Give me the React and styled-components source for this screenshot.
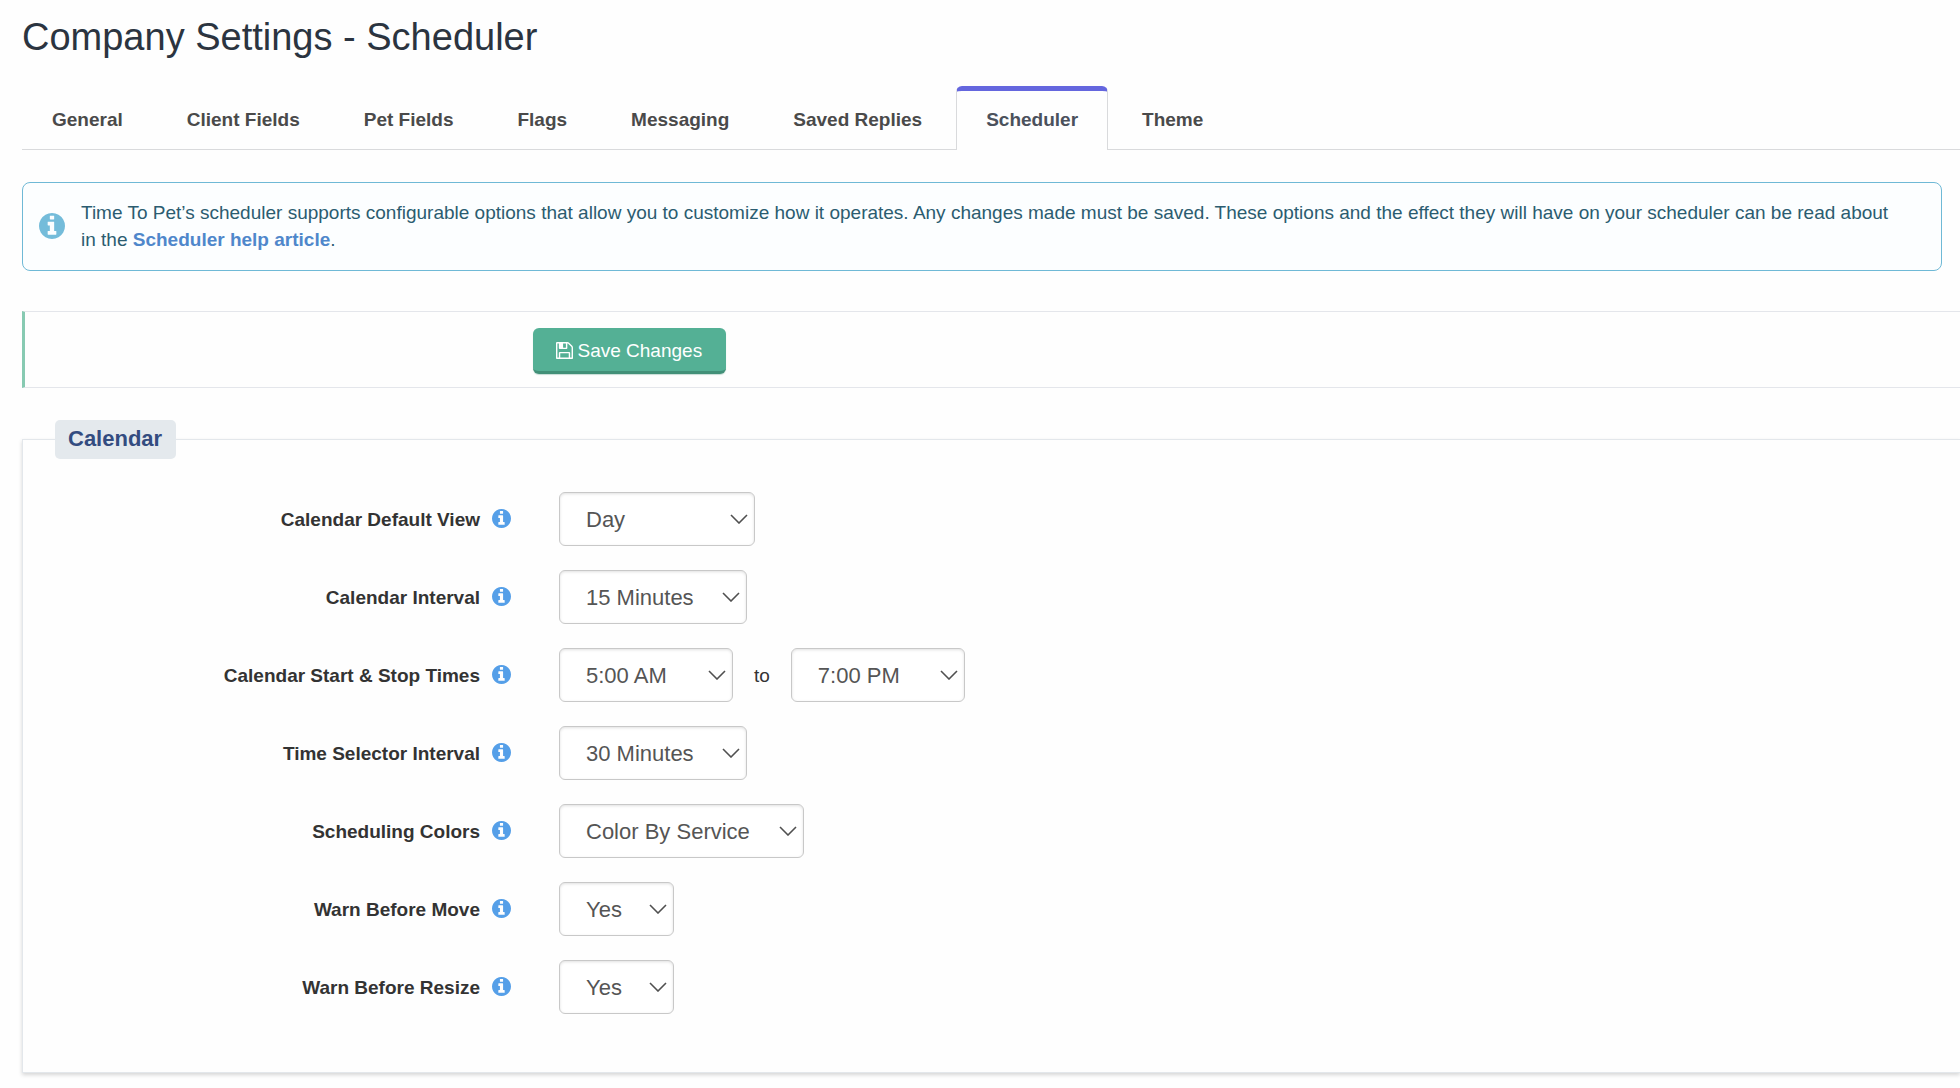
import React, { useState } from 'react';
import styled, { createGlobalStyle } from 'styled-components';

const tabs = [
    'General',
    'Client Fields',
    'Pet Fields',
    'Flags',
    'Messaging',
    'Saved Replies',
    'Scheduler',
    'Theme'
];

const times = ['5:00 AM', '6:00 AM', '7:00 AM', '8:00 AM', '5:00 PM', '6:00 PM', '7:00 PM', '8:00 PM'];
const intervals = ['15 Minutes', '30 Minutes', '60 Minutes'];

const fields = [
    { label: 'Calendar Default View', selects: [{ name: 'defaultView', width: 196, options: ['Day', 'Week', 'Month'] }] },
    { label: 'Calendar Interval', selects: [{ name: 'interval', width: 188, options: intervals }] },
    {
        label: 'Calendar Start & Stop Times',
        selects: [
            { name: 'startTime', width: 174, options: times },
            { name: 'stopTime', width: 174, options: times, ariaLabel: 'Calendar Stop Time' }
        ]
    },
    { label: 'Time Selector Interval', selects: [{ name: 'selectorInterval', width: 188, options: intervals }] },
    { label: 'Scheduling Colors', selects: [{ name: 'colors', width: 245, options: ['Color By Service', 'Color By Staff'] }] },
    { label: 'Warn Before Move', selects: [{ name: 'warnMove', width: 115, options: ['Yes', 'No'] }] },
    { label: 'Warn Before Resize', selects: [{ name: 'warnResize', width: 115, options: ['Yes', 'No'] }] }
];

const initialValues = {
    defaultView: 'Day',
    interval: '15 Minutes',
    startTime: '5:00 AM',
    stopTime: '7:00 PM',
    selectorInterval: '30 Minutes',
    colors: 'Color By Service',
    warnMove: 'Yes',
    warnResize: 'Yes'
};

const InfoIcon = () => (
    <svg viewBox="0 0 1536 1536" fill="currentColor" aria-hidden="true">
        <path d="M1024 1248v-160q0-14-9-23t-23-9h-96v-512q0-14-9-23t-23-9h-320q-14 0-23 9t-9 23v160q0 14 9 23t23 9h96v320h-96q-14 0-23 9t-9 23v160q0 14 9 23t23 9h448q14 0 23-9t9-23zM896 352v-160q0-14-9-23t-23-9h-192q-14 0-23 9t-9 23v160q0 14 9 23t23 9h192q14 0 23-9t9-23zM1536 768q0 209-103 385.500t-279.500 279.500-385.500 103-385.500-103-279.500-279.500-103-385.500 103-385.500 279.500-279.500 385.500-103 385.500 103 279.500 279.500 103 385.500z" />
    </svg>
);

const SaveIcon = () => (
    <svg width="17" height="17" viewBox="0 0 1536 1536" fill="currentColor" aria-hidden="true">
        <path d="M384 1408h768v-384h-768v384zM1280 1408h128v-896q0-14-10-38.500t-20-34.500l-281-281q-10-10-34-20t-39-10v416q0 40-28 68t-68 28h-576q-40 0-68-28t-28-68v-416h-128v1280h128v-416q0-40 28-68t68-28h832q40 0 68 28t28 68v416zM896 480v-320q0-13-9.500-22.500t-22.500-9.500h-192q-13 0-22.500 9.500t-9.500 22.500v320q0 13 9.500 22.500t22.500 9.500h192q13 0 22.500-9.500t9.500-22.500zM1536 512v928q0 40-28 68t-68 28h-1344q-40 0-68-28t-28-68v-1344q0-40 28-68t68-28h928q40 0 88 20t76 48l280 280q28 28 48 76t20 88z" />
    </svg>
);

const SelectBox = ({ id, name, width, options, ariaLabel, value, onChange }) => (
    <SelectWrap $width={width}>
        <Select id={id} name={name} aria-label={ariaLabel} value={value} onChange={onChange}>
            {options.map(option => <option key={option}>{option}</option>)}
        </Select>
        <Chevron viewBox="0 0 18 10" aria-hidden="true">
            <path d="M1 1l8 8 8-8" />
        </Chevron>
    </SelectWrap>
);

const App = () => {
    const [values, setValues] = useState(initialValues);

    const handleChange = (e) => {
        setValues({ ...values, [e.target.name]: e.target.value });
    }

    const handleSubmit = (e) => {
        e.preventDefault();
    }

    return (<Page>
        <GlobalStyle />
        <Title>Company Settings - Scheduler</Title>
        <TabBar>
            {tabs.map(tab => (
                <Tab key={tab} href="#" $active={tab === 'Scheduler'} aria-current={tab === 'Scheduler' ? 'page' : undefined}>
                    {tab}
                </Tab>
            ))}
        </TabBar>
        <Alert>
            <AlertIcon><InfoIcon /></AlertIcon>
            <AlertText>
                Time To Pet’s scheduler supports configurable options that allow you to customize how it operates. Any changes made must be saved. These options and the effect they will have on your scheduler can be read about in the <HelpLink href="#">Scheduler help article</HelpLink>.
            </AlertText>
        </Alert>
        <form onSubmit={handleSubmit}>
            <SaveBar>
                <SaveButton type="submit"><SaveIcon />Save Changes</SaveButton>
            </SaveBar>
            <Panel>
                <PanelTitle>Calendar</PanelTitle>
                <Rows>
                    {fields.map(({ label, selects }) => (
                        <Row key={label}>
                            <LabelCell>
                                <label htmlFor={selects[0].name}>{label}</label>
                                <HelpIcon><InfoIcon /></HelpIcon>
                            </LabelCell>
                            <Controls>
                                {selects.map((select, i) => (
                                    <React.Fragment key={select.name}>
                                        {i > 0 && <span>to</span>}
                                        <SelectBox {...select} id={select.name} value={values[select.name]} onChange={handleChange} />
                                    </React.Fragment>
                                ))}
                            </Controls>
                        </Row>
                    ))}
                </Rows>
            </Panel>
        </form>
    </Page>);
}

export default App;

const GlobalStyle = createGlobalStyle`
    * {
        box-sizing: border-box;
    }

    body {
        margin: 0;
        background: #fefefe;
        color: #333;
        font-family: "Liberation Sans", Arial, sans-serif;
        font-size: 19px;
        line-height: 27px;
    }
`

const Page = styled.main`
    padding: 13px 0 14px 22px;
`

const Title = styled.h1`
    margin: 0 0 25px;
    color: #2b3440;
    font-size: 38px;
    font-weight: 400;
    line-height: 48px;
`

const TabBar = styled.nav`
    display: flex;
    gap: 4px;
    border-bottom: 1px solid #d9dadc;
`

const Tab = styled.a`
    margin-bottom: -1px;
    padding: 15px 29px 17px;
    border: 1px solid transparent;
    border-width: 5px 1px 0;
    border-radius: 6px 6px 0 0;
    color: #4a4a4a;
    font-weight: 700;
    text-decoration: none;
    ${props => props.$active && `
        border-color: #6466de #d9dadc;
        background: #fefefe;
        color: #4b515c;
    `}
`

const Alert = styled.div`
    display: flex;
    align-items: center;
    gap: 16px;
    margin: 32px 18px 40px 0;
    padding: 16px 40px 17px 16px;
    border: 1px solid #6fb9d6;
    border-radius: 8px;
    background: #fcfeff;
    color: #2b5c70;
`

const AlertIcon = styled.span`
    display: flex;
    flex: 0 0 26px;
    color: #74bcda;
`

const AlertText = styled.p`
    margin: 0;
`

const HelpLink = styled.a`
    color: #4f87cb;
    font-weight: 700;
    text-decoration: none;
`

const SaveBar = styled.div`
    margin-bottom: 32px;
    padding: 16px 0 13px calc(25% + 23px);
    border-top: 1px solid #e4e6eb;
    border-bottom: 1px solid #e4e6eb;
    border-left: 3px solid #87cab2;
`

const SaveButton = styled.button`
    display: flex;
    align-items: center;
    gap: 5px;
    padding: 9px 24px 7px 23px;
    border: 0;
    border-bottom: 3px solid #429078;
    border-radius: 6px;
    background: #54b095;
    box-shadow: 0 1px 1px rgba(66, 144, 120, 0.3);
    color: #fff;
    font: inherit;
    cursor: pointer;
`

const Panel = styled.fieldset`
    min-width: 0;
    margin: 0;
    padding: 0;
    border: 1px solid #e3e7eb;
    border-right: 0;
    box-shadow: 0 2px 4px rgba(0, 0, 0, 0.16);
`

const PanelTitle = styled.legend`
    margin-left: 32px;
    padding: 5px 14px 7px 13px;
    border-radius: 5px;
    background: #e4e9ed;
    color: #334c80;
    font-size: 22px;
    font-weight: 700;
`

const Rows = styled.div`
    display: flex;
    flex-direction: column;
    gap: 24px;
    padding: 33px 0 58px 21px;
`

const Row = styled.div`
    display: grid;
    grid-template-columns: minmax(0, 1fr) minmax(0, 3fr);
    column-gap: 48px;
    align-items: center;
`

const LabelCell = styled.div`
    display: flex;
    justify-content: flex-end;
    align-items: center;
    gap: 12px;
    font-weight: 700;
`

const HelpIcon = styled.span`
    display: flex;
    flex: 0 0 19px;
    padding-bottom: 2px;
    color: #559fe8;
`

const Controls = styled.div`
    display: flex;
    align-items: center;
    gap: 21px;
`

const SelectWrap = styled.div`
    position: relative;
    width: ${props => props.$width}px;
`

const Select = styled.select`
    display: block;
    width: 100%;
    height: 54px;
    padding: 0 26px;
    border: 1px solid #c8c8c8;
    border-radius: 6px;
    appearance: none;
    background: #fff;
    box-shadow: inset 0 1px 3px rgba(0, 0, 0, 0.12);
    color: #555;
    font-family: inherit;
    font-size: 22px;
`

const Chevron = styled.svg`
    position: absolute;
    top: 22px;
    right: 7px;
    width: 18px;
    height: 10px;
    fill: none;
    stroke: #505050;
    stroke-width: 1.6;
    pointer-events: none;
`
